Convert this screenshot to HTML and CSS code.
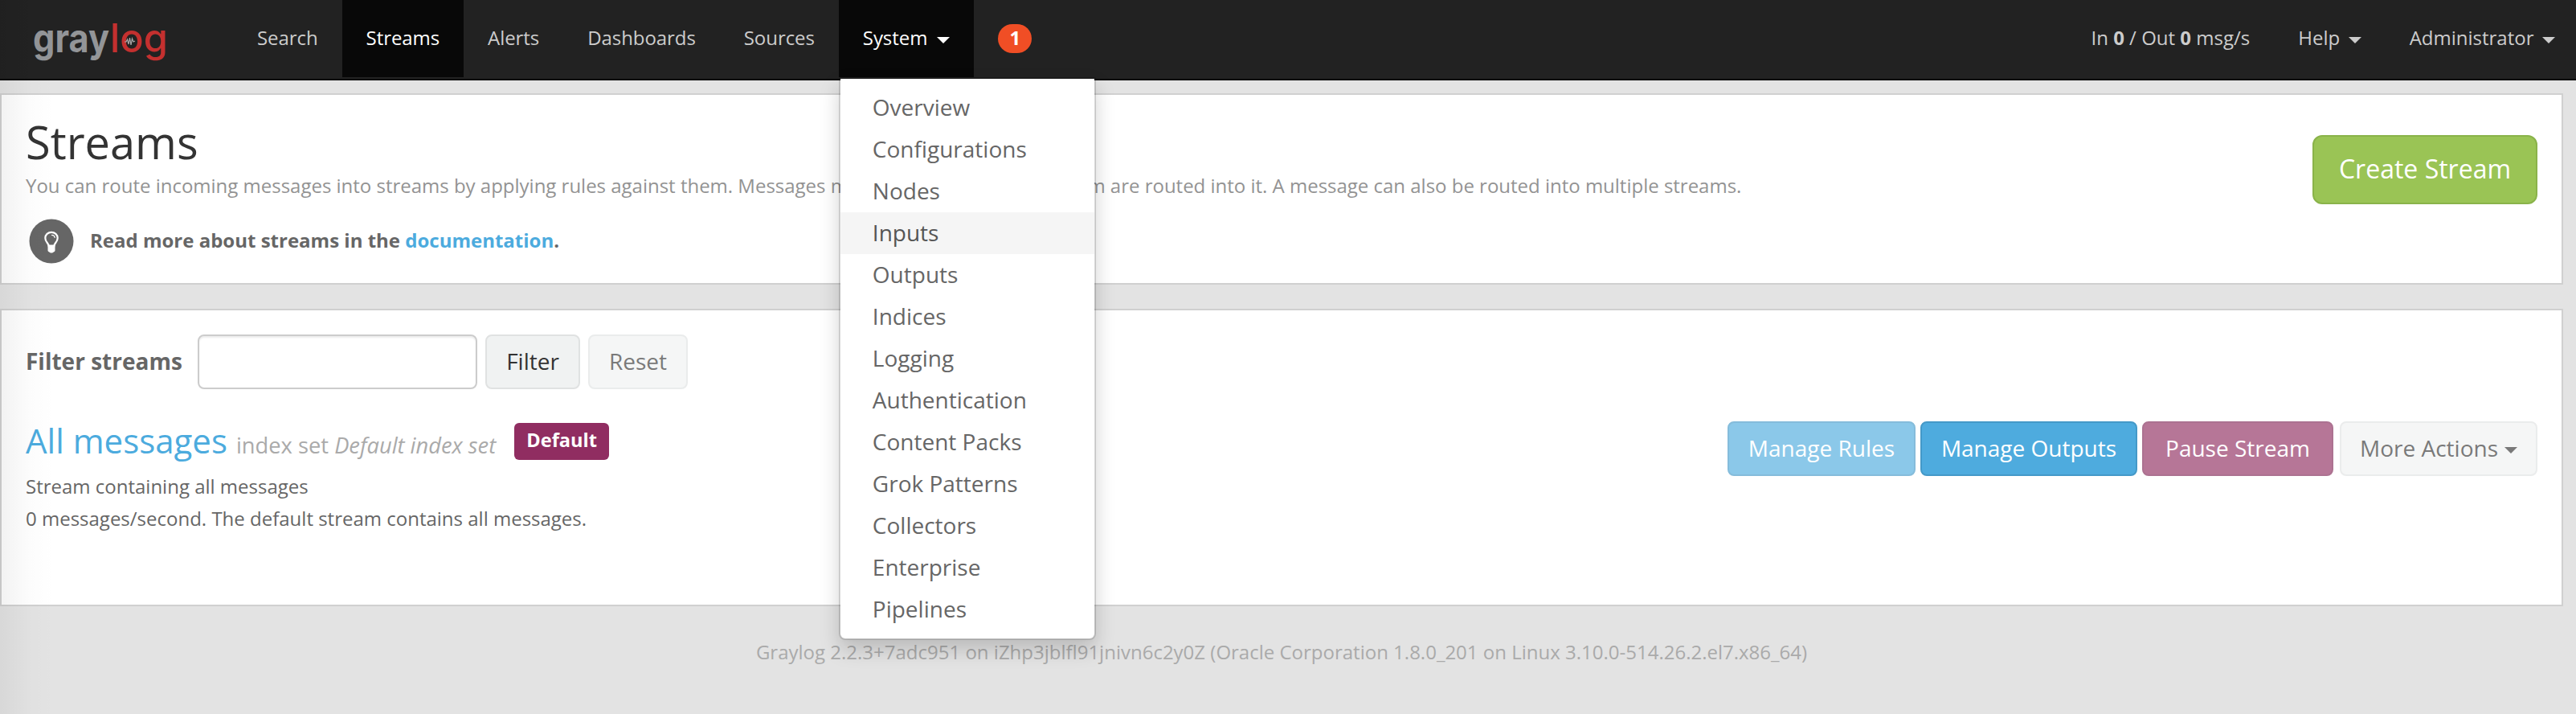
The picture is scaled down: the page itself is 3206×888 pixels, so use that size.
FILE: index.html
```html
<!DOCTYPE html>
<html lang="en">
<head>
<meta charset="utf-8">
<title>Streams</title>
<link rel="stylesheet" href="styles.css">
</head>
<body>
<nav class="navbar">
  <a class="brand" href="#">
    <svg width="176" height="80" viewBox="0 0 176 80" aria-label="graylog">
      <text class="brand-gray" x="1" y="55" textLength="95" lengthAdjust="spacingAndGlyphs">gray</text>
      <text class="brand-log" x="97" y="55" textLength="72" lengthAdjust="spacingAndGlyphs">log</text>
      <polyline class="brand-pulse" points="115,42 117,42 118.500,39 120,45 121.500,37 123,46 124.500,38 126,42 128,41"/>
    </svg>
  </a>
  <ul class="nav">
    <li class="nav-item"><a href="#">Search</a></li>
    <li class="nav-item active"><a href="#">Streams</a></li>
    <li class="nav-item"><a href="#">Alerts</a></li>
    <li class="nav-item"><a href="#">Dashboards</a></li>
    <li class="nav-item"><a href="#">Sources</a></li>
    <li class="nav-item active open"><a href="#">System<span class="caret"></span></a>
      <ul class="menu">
        <li>Overview</li>
        <li>Configurations</li>
        <li>Nodes</li>
        <li class="hover">Inputs</li>
        <li>Outputs</li>
        <li>Indices</li>
        <li>Logging</li>
        <li>Authentication</li>
        <li>Content Packs</li>
        <li>Grok Patterns</li>
        <li>Collectors</li>
        <li>Enterprise</li>
        <li>Pipelines</li>
      </ul>
    </li>
  </ul>
  <span class="notifications">1</span>
  <ul class="nav nav-right">
    <li class="nav-item"><a href="#">In <b>0</b> / Out <b>0</b> msg/s</a></li>
    <li class="nav-item"><a href="#">Help<span class="caret"></span></a></li>
    <li class="nav-item"><a href="#">Administrator<span class="caret"></span></a></li>
  </ul>
</nav>

<main class="page">
  <section class="panel header-panel">
    <div>
      <h1>Streams</h1>
      <p class="description">You can route incoming messages into streams by applying rules against them. Messages matching the rules of a stream are routed into it. A message can also be routed into multiple streams.</p>
      <p class="support">
        <svg class="bulb" width="56" height="56" viewBox="0 0 56 56">
          <circle cx="28" cy="28" r="27.5" fill="#666"/>
          <path d="M24.500 33.500c0-3-4.200-4.500-4.200-9.500a7.700 7.200 0 0 1 15.400 0c0 5-4.200 6.500-4.200 9.500z" fill="none" stroke="#fff" stroke-width="2.200"/>
          <path d="M28.500 20.300c2 0 3.400 1.100 3.600 3" fill="none" stroke="#fff" stroke-width="1.300" stroke-linecap="round"/>
          <path d="M23.500 33h9v6.500c0 1.200-1 1.800-2 2c-.500 1.400-4.500 1.400-5 0c-1-.200-2-.800-2-2z" fill="#fff"/>
        </svg>
        <strong>Read more about streams in the <a href="#">documentation</a>.</strong>
      </p>
    </div>
    <button class="btn btn-create">Create Stream</button>
  </section>

  <section class="panel list-panel">
    <form class="filter">
      <label for="q">Filter streams</label>
      <input id="q" type="text">
      <button type="button" class="btn btn-default">Filter</button>
      <button type="button" class="btn btn-default disabled">Reset</button>
    </form>
    <div class="stream">
      <div>
        <h2><a href="#">All messages</a><small>index set <em>Default index set</em></small><span class="label">Default</span></h2>
        <p>Stream containing all messages</p>
        <p>0 messages/second. The default stream contains all messages.</p>
      </div>
      <div class="actions">
        <button class="btn btn-info disabled rules">Manage Rules</button>
        <button class="btn btn-info outputs">Manage Outputs</button>
        <button class="btn btn-primary disabled pause">Pause Stream</button>
        <button class="btn btn-default disabled more">More Actions<span class="caret"></span></button>
      </div>
    </div>
  </section>
  <footer>Graylog 2.2.3+7adc951 on iZhp3jblfl91jnivn6c2y0Z (Oracle Corporation 1.8.0_201 on Linux 3.10.0-514.26.2.el7.x86_64)</footer>
</main>
<div class="edge-shade"></div>
</body>
</html>
```
FILE: styles.css
```css
* { box-sizing: border-box; }
body {
  margin: 0;
  height: 888px;
  overflow: hidden;
  background: #e3e3e3;
  color: #666;
  font: 24px/40px "Open Sans", "Noto Sans", sans-serif;
}
h1, h2, p, ul { margin: 0; padding: 0; font-weight: 400; }
ul { list-style: none; }
a { color: #4cabde; text-decoration: none; }

.navbar {
  display: flex;
  align-items: flex-start;
  height: 100px;
  background: #222;
  border-bottom: 2px solid #080808;
}
.brand { display: block; width: 290px; padding: 10px 0 0 40px; }
.brand svg { display: block; overflow: visible; }
.brand-gray { font: 700 49px Inter, sans-serif; fill: #939598; }
.brand-log { font: 500 49px Inter, sans-serif; fill: #c4302f; }
.brand-pulse { fill: none; stroke: #aaa; stroke-width: 1.2; }
.nav { display: flex; }
.nav-item { position: relative; }
.nav-item > a {
  display: flex;
  align-items: center;
  height: 96px;
  padding: 0 30px 2px;
  color: #ccc;
  letter-spacing: -.07px;
  white-space: pre;
}
.nav-item.active > a { background: #080808; color: #fff; }
.caret {
  margin: 6px 0 0 12px;
  border: 8px solid transparent;
  border-top-color: currentColor;
  border-bottom: 0;
}
.notifications {
  width: 42px;
  height: 36px;
  margin: 30px 0 0 30px;
  border-radius: 18px;
  background: #f04e25;
  color: #fff;
  font-weight: 700;
  line-height: 33px;
  text-align: center;
}
.nav-right { margin-left: auto; padding-right: 26px; }
.nav-right .nav-item > a { letter-spacing: 0; }
.nav-right .nav-item:last-child > a { padding-right: 0; }
.nav-right .caret { margin-left: 10.5px; }
.menu {
  position: absolute;
  top: 96px;
  left: 0;
  z-index: 5;
  width: 320px;
  padding: 10px 0;
  border: 2px solid rgba(0, 0, 0, .15);
  border-radius: 0 0 8px 8px;
  background: #fff;
  background-clip: padding-box;
  box-shadow: 0 12px 24px rgba(0, 0, 0, .175);
  font-size: 28px;
}
.menu li { padding: 5px 40px 7px; }
.menu .hover { background: #f5f5f5; color: #555; }

.page { width: 3190px; padding-top: 16px; }
.panel { border: 2px solid #d0d0d0; background: #fff; }
.header-panel {
  display: flex;
  justify-content: space-between;
  height: 238px;
  padding: 27px 30px 0;
}
h1 { color: #333; font-size: 56px; line-height: 62px; }
.description { margin-top: 7px; color: #939393; line-height: 34px; letter-spacing: -.01px; }
.support { display: flex; align-items: center; gap: 20px; margin-top: 24px; padding-left: 4px; }
.support strong { padding-bottom: 2px; }
.bulb { display: block; }

.btn {
  border: 2px solid transparent;
  border-radius: 8px;
  padding: 0 0 2px;
  font: 28px/40px "Open Sans", "Noto Sans", sans-serif;
  height: 68px;
  color: #fff;
}
.btn-create {
  width: 280px;
  height: 86px;
  margin-top: 23px;
  border-color: #8ab34a;
  border-radius: 12px;
  background: #9ac455;
  font-size: 32px;
}
.btn-default { border-color: #e0e2e2; background: #f0f2f2; color: #333; }
.btn-info { border-color: #4499c8; background: #4eabde; }
.btn-primary { border-color: #812857; background: #902d61; }
.btn.disabled { opacity: .65; }
.filter .btn { width: 118px; margin-left: 10px; }
.filter .btn.disabled { width: 124px; }

.list-panel { height: 370px; margin-top: 30px; padding: 30px 30px 0; }
.filter { display: flex; align-items: center; font-size: 28px; }
.filter label { width: 214px; padding-bottom: 2px; font-weight: 700; }
.filter input {
  width: 348px;
  height: 68px;
  border: 2px solid #ccc;
  border-radius: 8px;
  background: #fff;
  box-shadow: inset 0 2px 2px rgba(0, 0, 0, .075);
}
.stream { display: flex; justify-content: space-between; margin-top: 34px; }
h2 { display: flex; align-items: baseline; height: 60px; margin-bottom: 7px; font-size: 42px; line-height: 60px; }
h2 small { margin-left: 11px; color: #aaa; font-size: 27.3px; }
.label {
  align-self: flex-start;
  width: 118px;
  height: 46px;
  margin: 8px 0 0 23px;
  border-radius: 6px;
  background: #902d61;
  color: #fff;
  font-size: 23.6px;
  font-weight: 700;
  line-height: 42px;
  text-align: center;
}
.actions { display: flex; gap: 6px; margin-top: 6px; }
.rules { width: 234px; }
.outputs { width: 270px; }
.pause { width: 238px; }
.more { display: flex; align-items: center; justify-content: center; width: 246px; margin-left: 2px; }
.more .caret { margin-left: 8px; }

footer { margin-top: 37px; color: #aaa; text-align: center; }
.edge-shade {
  position: absolute;
  top: 0;
  left: 0;
  width: 68px;
  height: 888px;
  background: linear-gradient(90deg, rgba(0, 0, 0, .05), rgba(0, 0, 0, .012) 55%, transparent);
}
```
